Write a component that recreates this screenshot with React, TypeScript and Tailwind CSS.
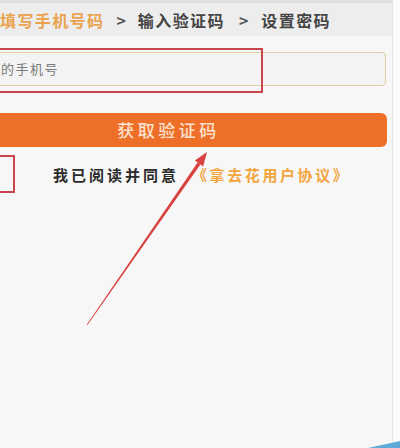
export default function App() {
  return (
    <div
      className="relative w-[400px] h-[448px] overflow-hidden bg-white"
      style={{ fontFamily: '"Noto Sans CJK SC", "Noto Sans", sans-serif' }}
    >
      <div className="flex h-full">
        <div className="w-[393px] h-full bg-[#f7f7f7] border-r border-[#e4e4e4] flex flex-col">
          <div className="h-[3px] bg-[#dedede]" />
          <div className="h-[33px] bg-[#ededed] flex items-center text-[16px] font-bold tracking-[1.4px] whitespace-nowrap">
            <span className="text-[#eaa24e]">填写手机号码</span>
            <span className="ml-[12px] text-[#555] tracking-normal">&gt;</span>
            <span className="ml-[12px] text-[#444]">输入验证码</span>
            <span className="ml-[14px] text-[#555] tracking-normal">&gt;</span>
            <span className="ml-[13px] text-[#444]">设置密码</span>
          </div>

          <div className="mt-[16px] -ml-[10px] w-[396px] h-[34px] rounded-[4px] border border-[#e3cda3] bg-[#f3f3f3] flex items-center pl-[10px]">
            <span className="text-[13px] tracking-[1.5px] text-[#7a7a7a]">的手机号</span>
          </div>

          <div className="mt-[27px] -ml-[10px] w-[397px] h-[34px] rounded-[6px] bg-[#ee6f28] flex items-center justify-center pr-[40px]">
            <span className="text-[17px] tracking-[3.5px] text-[#fbe1cf] font-medium">获取验证码</span>
          </div>

          <div className="mt-[18px] h-[20px] flex items-center pl-[53px] whitespace-nowrap">
            <span className="text-[15px] font-bold tracking-[3px] text-[#2b2b2b]">我已阅读并同意</span>
            <span className="ml-[13px] text-[15px] font-bold tracking-[2.6px] text-[#f2a53e]">《拿去花用户协议》</span>
          </div>
        </div>
        <div className="flex-1 bg-[#fbfbfb]" />
      </div>

      {/* annotation boxes */}
      <div className="absolute left-[-10px] top-[48px] w-[273px] h-[45px] border-2 border-[#c9464c]" />
      <div className="absolute left-[-30px] top-[155px] w-[45px] h-[38px] border-2 border-[#c9464c]" />

      {/* annotation arrow */}
      <svg className="absolute left-0 top-0" width="400" height="448" viewBox="0 0 400 448">
        <polygon
          points="87.3,325.2 86.7,324.8 197.6,162.5 200.4,164.5"
          fill="#d8423f"
        />
        <polygon points="207,152 203.1,166.4 194.9,160.6" fill="#d8423f" />
        <polygon points="368,448 400,441 400,448" fill="#5fa9d6" />
      </svg>
    </div>
  )
}
